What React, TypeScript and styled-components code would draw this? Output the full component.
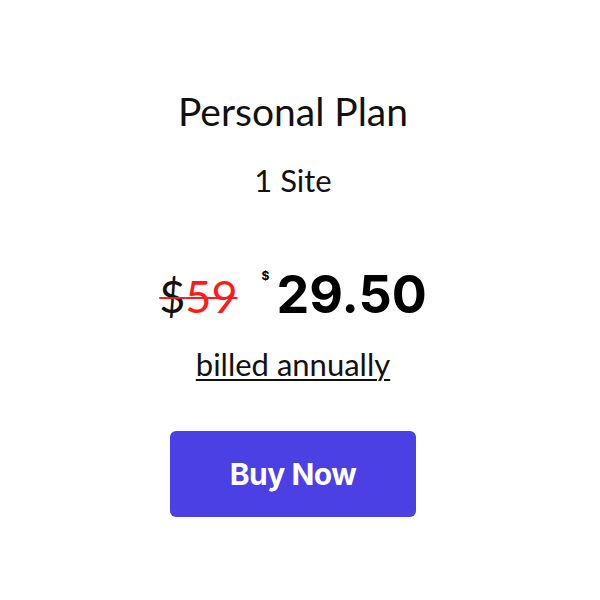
import React from 'react';
import styled, { createGlobalStyle } from 'styled-components';

const GlobalStyle = createGlobalStyle`
  body {
    margin: 0;
    background: #ffffff;
    font-family: Lato, "Liberation Sans", sans-serif;
    color: #111111;
  }
`;

const Card = styled.div`
  width: 586px;
  display: flex;
  flex-direction: column;
  align-items: center;
  padding-top: 89px;
`;

const PlanName = styled.h2`
  margin: 0;
  font-family: Lato, sans-serif;
  font-weight: 400;
  font-size: 39px;
  line-height: 44px;
  color: #111;
`;

const Sites = styled.div`
  margin-top: 30px;
  font-family: Lato, sans-serif;
  font-size: 31px;
  line-height: 34px;
  color: #111;
`;

const PriceRow = styled.div`
  margin-top: 64px;
  display: flex;
  align-items: flex-start;
  gap: 24px;
`;

const OldPrice = styled.span`
  font-family: Lato, sans-serif;
  font-weight: 400;
  font-style: normal;
  font-synthesis: none;
  font-size: 45px;
  line-height: 50px;
  color: #111;
  text-decoration: line-through;
  text-decoration-color: #ff1a1a;
  text-decoration-thickness: 2px;
  margin-top: 10px;
`;

const OldDigits = styled.span`
  color: #ff1a1a;
`;

const NewPrice = styled.div`
  display: flex;
  align-items: flex-start;
  font-family: Inter, sans-serif;
  font-weight: 700;
  color: #000;
`;

const Currency = styled.span`
  font-size: 12px;
  line-height: 12px;
  margin-right: 7px;
  margin-top: 9px;
`;

const Amount = styled.span`
  font-size: 52px;
  line-height: 60px;
  margin-top: 4px;
`;

const Billing = styled.a`
  margin-top: 22px;
  font-family: Lato, sans-serif;
  font-size: 31px;
  line-height: 34px;
  color: #111;
  text-decoration: underline;
  text-decoration-thickness: 2px;
  text-underline-offset: 3px;
`;

const BuyButton = styled.button`
  margin-top: 50px;
  width: 246px;
  height: 86px;
  border: none;
  border-radius: 6px;
  background: #4a40e4;
  color: #fff;
  font-family: Inter, sans-serif;
  font-weight: 700;
  font-size: 30px;
  letter-spacing: -0.5px;
  cursor: pointer;
`;

const App: React.FC = () => {
  return (
    <>
      <GlobalStyle />
      <Card>
        <PlanName>Personal Plan</PlanName>
        <Sites>1 Site</Sites>
        <PriceRow>
          <OldPrice>
            $<OldDigits>59</OldDigits>
          </OldPrice>
          <NewPrice>
            <Currency>$</Currency>
            <Amount>29.50</Amount>
          </NewPrice>
        </PriceRow>
        <Billing href="#">billed annually</Billing>
        <BuyButton>Buy Now</BuyButton>
      </Card>
    </>
  );
};

export default App;
